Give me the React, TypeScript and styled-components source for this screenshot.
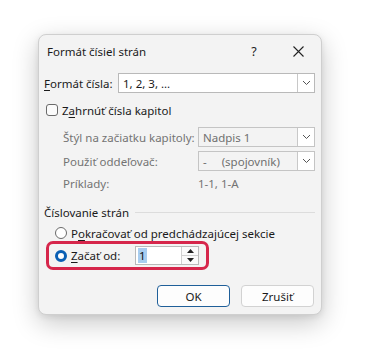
import React from 'react';
import styled, { createGlobalStyle } from 'styled-components';

const GlobalStyle = createGlobalStyle`
  html, body {
    margin: 0;
    padding: 0;
    background: #ffffff;
  }
  body {
    font-family: 'Noto Sans', 'Open Sans', sans-serif;
    font-size: 11.5px;
    color: #1a1a1a;
  }
`;

const Page = styled.div`
  width: 370px;
  height: 350px;
  padding: 34px 0 0 38px;
  box-sizing: border-box;
`;

const Dialog = styled.div`
  width: 284px;
  height: 281px;
  box-sizing: border-box;
  background: #f3f3f3;
  border: 1px solid #cfcfcf;
  border-radius: 8px;
  box-shadow: 0 8px 26px rgba(0, 0, 0, 0.22), 0 2px 6px rgba(0, 0, 0, 0.08);
  display: flex;
  flex-direction: column;
`;

const TitleBar = styled.div`
  height: 32px;
  display: flex;
  align-items: center;
  padding: 0 0 0 8px;
`;

const Title = styled.div`
  flex: 1;
  font-size: 11.5px;
  color: #1b1b1b;
`;

const TitleButton = styled.div<{ $w: number }>`
  width: ${({ $w }) => $w}px;
  height: 32px;
  display: flex;
  align-items: center;
  justify-content: center;
  font-size: 12.5px;
  color: #222;
`;

const Body = styled.div`
  flex: 1;
  display: flex;
  flex-direction: column;
  padding: 6px 6px 0 5px;
`;

const FieldRow = styled.div<{ $indent?: number; $labelWidth: number; $mt?: number }>`
  display: flex;
  align-items: center;
  padding-left: ${({ $indent }) => $indent ?? 0}px;
  margin-top: ${({ $mt }) => $mt ?? 0}px;
  height: 20px;

  & > span:first-child {
    width: ${({ $labelWidth }) => $labelWidth}px;
    flex-shrink: 0;
  }
`;

const Label = styled.span<{ $disabled?: boolean }>`
  color: ${({ $disabled }) => ($disabled ? '#737373' : '#1a1a1a')};
  white-space: nowrap;
`;

const U = styled.u`
  text-underline-offset: 2px;
`;

const Select = styled.div<{ $disabled?: boolean }>`
  flex: 1;
  height: 20px;
  box-sizing: border-box;
  display: flex;
  align-items: center;
  background: ${({ $disabled }) => ($disabled ? '#f3f3f3' : '#ffffff')};
  border: 1px solid ${({ $disabled }) => ($disabled ? '#c4c4c4' : '#b9b9b9')};
  color: ${({ $disabled }) => ($disabled ? '#6f6f6f' : '#1a1a1a')};
  padding-left: 4px;
`;

const SelectText = styled.span`
  flex: 1;
  white-space: pre;
`;

const DropButton = styled.div`
  width: 17px;
  height: 18px;
  box-sizing: border-box;
  background: #ffffff;
  border-left: 1px solid #c8c8c8;
  display: flex;
  align-items: center;
  justify-content: center;
`;

const CheckRow = styled.div<{ $mt?: number; $indent?: number }>`
  display: flex;
  align-items: center;
  gap: 4px;
  height: 16px;
  margin-top: ${({ $mt }) => $mt ?? 0}px;
  padding-left: ${({ $indent }) => $indent ?? 0}px;
`;

const CheckBox = styled.div`
  width: 10px;
  height: 10px;
  border: 1px solid #6a6a6a;
  border-radius: 3px;
  background: #fbfbfb;
`;

const Radio = styled.div<{ $checked?: boolean }>`
  width: ${({ $checked }) => ($checked ? 6 : 10)}px;
  height: ${({ $checked }) => ($checked ? 6 : 10)}px;
  border-radius: 50%;
  border: ${({ $checked }) => ($checked ? '3px solid #0a5fb4' : '1px solid #6a6a6a')};
  background: #ffffff;
  flex-shrink: 0;
`;

const GroupHeader = styled.div`
  display: flex;
  align-items: center;
  gap: 6px;
  margin-top: 11px;
  height: 16px;
`;

const GroupLine = styled.div`
  flex: 1;
  height: 1px;
  background: #dcdcdc;
`;

const Highlight = styled.div`
  margin: 0 0 0 2px;
  width: 163px;
  height: 29px;
  box-sizing: border-box;
  border: 3px solid #d6264b;
  border-radius: 7px;
  display: flex;
  align-items: center;
  padding-left: 6px;
  gap: 4px;
`;

const StartLabel = styled(Label)`
  width: 56px;
`;

const SpinBox = styled.div`
  margin-left: 4px;
  width: 64px;
  height: 19px;
  box-sizing: border-box;
  border: 1px solid #b9b9b9;
  background: #fff;
  display: flex;
  align-items: center;
  padding-left: 2px;
`;

const SpinValue = styled.span`
  flex: 1;
  & > mark {
    background: #a8cdf0;
    color: #111;
    padding: 0 1px;
  }
`;

const SpinButtons = styled.div`
  width: 16px;
  height: 17px;
  display: flex;
  flex-direction: column;
  border-left: 1px solid #d0d0d0;
`;

const SpinBtn = styled.div<{ $top?: boolean }>`
  flex: 1;
  display: flex;
  align-items: center;
  justify-content: center;
  border-top: ${({ $top }) => ($top ? 'none' : '1px solid #d0d0d0')};
  background: #fafafa;
`;

const Footer = styled.div`
  display: flex;
  justify-content: flex-end;
  gap: 11px;
  padding: 15px 1px 0 0;
`;

const Button = styled.div<{ $primary?: boolean }>`
  width: 73px;
  height: 22px;
  box-sizing: border-box;
  background: #fdfdfd;
  border: 1px solid ${({ $primary }) => ($primary ? '#1f5f99' : '#d2d2d2')};
  border-radius: 4px;
  display: flex;
  align-items: center;
  justify-content: center;
  color: #1a1a1a;
`;

const Chevron = () => (
  <svg width="9" height="6" viewBox="0 0 9 6">
    <path d="M1 1 L4.5 4.5 L8 1" fill="none" stroke="#555" strokeWidth="1" />
  </svg>
);

const Triangle = ({ up }: { up?: boolean }) => (
  <svg width="7" height="4" viewBox="0 0 7 4">
    <path d={up ? 'M0 4 L3.5 0 L7 4 Z' : 'M0 0 L3.5 4 L7 0 Z'} fill="#222" />
  </svg>
);

const CloseIcon = () => (
  <svg width="11" height="11" viewBox="0 0 11 11">
    <path d="M0.5 0.5 L10.5 10.5 M10.5 0.5 L0.5 10.5" stroke="#222" strokeWidth="1.1" />
  </svg>
);

const App = () => (
  <>
    <GlobalStyle />
    <Page>
      <Dialog>
        <TitleBar>
          <Title>Formát čísiel strán</Title>
          <TitleButton $w={42}>?</TitleButton>
          <TitleButton $w={46}>
            <CloseIcon />
          </TitleButton>
        </TitleBar>
        <Body>
          <FieldRow $labelWidth={74} $indent={0}>
            <Label>
              <U>F</U>ormát čísla:
            </Label>
            <Select>
              <SelectText>1, 2, 3, ...</SelectText>
              <DropButton>
                <Chevron />
              </DropButton>
            </Select>
          </FieldRow>
          <CheckRow $mt={9} $indent={2}>
            <CheckBox />
            <Label>
              Z<U>a</U>hrnúť čísla kapitol
            </Label>
          </CheckRow>
          <FieldRow $labelWidth={135} $indent={19} $mt={9}>
            <Label $disabled>Štýl na začiatku kapitoly:</Label>
            <Select $disabled>
              <SelectText>Nadpis 1</SelectText>
              <DropButton>
                <Chevron />
              </DropButton>
            </Select>
          </FieldRow>
          <FieldRow $labelWidth={135} $indent={19} $mt={4}>
            <Label $disabled>Použiť oddeľovač:</Label>
            <Select $disabled>
              <SelectText>-     (spojovník)</SelectText>
              <DropButton>
                <Chevron />
              </DropButton>
            </Select>
          </FieldRow>
          <FieldRow $labelWidth={135} $indent={19} $mt={2}>
            <Label $disabled>Príklady:</Label>
            <Label $disabled>1-1, 1-A</Label>
          </FieldRow>
          <GroupHeader>
            <Label>Číslovanie strán</Label>
            <GroupLine />
          </GroupHeader>
          <CheckRow $mt={5} $indent={11}>
            <Radio />
            <Label>
              P<U>o</U>kračovať od predchádzajúcej sekcie
            </Label>
          </CheckRow>
          <Highlight>
            <Radio $checked />
            <StartLabel>
              <U>Z</U>ačať od:
            </StartLabel>
            <SpinBox>
              <SpinValue>
                <mark>1</mark>
              </SpinValue>
              <SpinButtons>
                <SpinBtn $top>
                  <Triangle up />
                </SpinBtn>
                <SpinBtn>
                  <Triangle />
                </SpinBtn>
              </SpinButtons>
            </SpinBox>
          </Highlight>
          <Footer>
            <Button $primary>OK</Button>
            <Button>Zrušiť</Button>
          </Footer>
        </Body>
      </Dialog>
    </Page>
  </>
);

export default App;
